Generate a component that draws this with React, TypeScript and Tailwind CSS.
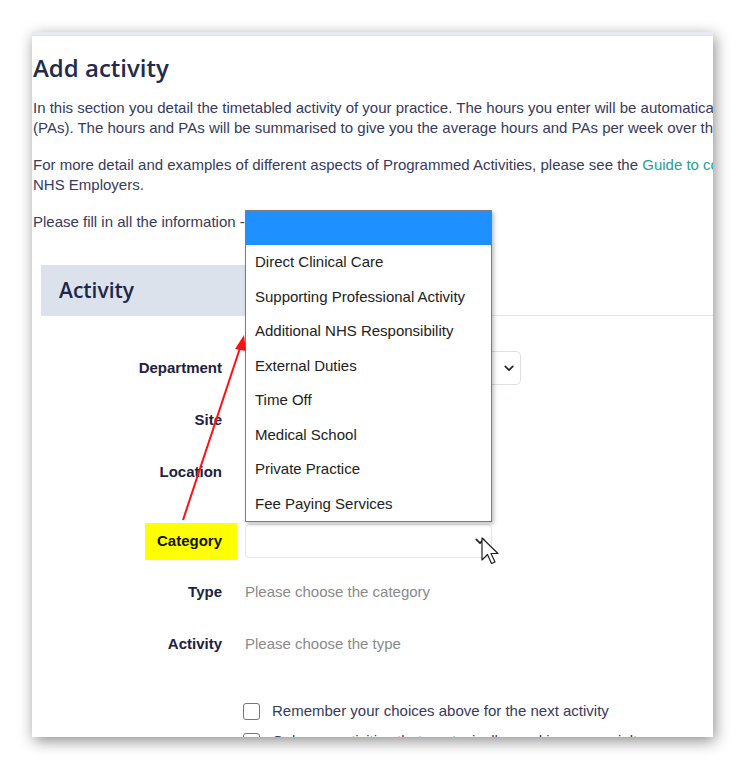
import React from 'react';

const categories = [
  'Direct Clinical Care',
  'Supporting Professional Activity',
  'Additional NHS Responsibility',
  'External Duties',
  'Time Off',
  'Medical School',
  'Private Practice',
  'Fee Paying Services',
];

const Chevron: React.FC<{ className?: string }> = ({ className }) => (
  <svg viewBox="0 0 12 8" className={className} fill="none">
    <path d="M1.5 1.5 L6 6 L10.5 1.5" stroke="#222" strokeWidth="2" strokeLinecap="round" strokeLinejoin="round" />
  </svg>
);

const FormRow: React.FC<{ label: React.ReactNode; className?: string; children?: React.ReactNode }> = ({
  label,
  className = '',
  children,
}) => (
  <div className={`flex items-center h-[34px] ${className}`}>
    <div className="w-[189px] flex justify-end text-[15px] font-bold text-[#1d2142]">{label}</div>
    <div className="ml-[23px] flex-1 flex items-center">{children}</div>
  </div>
);

const App: React.FC = () => {
  return (
    <div className="w-[745px] h-[769px] bg-white p-8 font-['Liberation_Sans',Arial,sans-serif]">
      <div className="relative w-[681px] h-[705px] overflow-hidden bg-white shadow-[2px_4px_14px_rgba(0,0,0,0.45)]">
        <div className="h-[4px] bg-[#e8ecf0] border-b border-[#dde2e7]" />

        <div className="pl-[1px] text-[15px] leading-[20px] text-[#363a5e] whitespace-nowrap">
          <h1 className="mt-[18px] mb-[16px] text-[24px] leading-[28px] font-semibold text-[#222a4e] font-['Open_Sans',sans-serif]">
            Add activity
          </h1>
          <p className="mb-[17px]">
            In this section you detail the timetabled activity of your practice. The hours you enter will be automatically converted into Programmed Activities
            <br />
            (PAs). The hours and PAs will be summarised to give you the average hours and PAs per week over the year.
          </p>
          <p className="mb-[17px]">
            For more detail and examples of different aspects of Programmed Activities, please see the{' '}
            <span className="text-[#2a9d90]">Guide to consultant job planning</span> produced by
            <br />
            NHS Employers.
          </p>
          <p>Please fill in all the information - all fields are mandatory.</p>

          <div className="ml-[8px] mt-[33px] border-b border-[#e1e5ea]">
            <div className="w-[400px] h-[50px] bg-[#dbe2eb] flex items-center pl-[18px]">
              <span className="text-[21px] font-semibold text-[#1f2749] font-['Open_Sans',sans-serif]">Activity</span>
            </div>
          </div>

          <div className="pt-[35px]">
            <FormRow label="Department">
              <div className="w-[276px] h-[34px] border border-[#dcdfe3] rounded-[5px] flex items-center justify-end pr-[6px]">
                <Chevron className="w-[10px] h-[7px]" />
              </div>
            </FormRow>
            <FormRow label="Site" className="mt-[18px]" />
            <FormRow label="Location" className="mt-[18px]" />
            <FormRow
              className="mt-[35px]"
              label={
                <span className="bg-[#ffff00] h-[37px] flex items-center pl-[12px] pr-[15px] -mr-[15px] text-[#111]">
                  Category
                </span>
              }
            >
              <div className="w-[247px] h-[34px] border border-[#e2e4e7] rounded-[4px] flex items-center justify-end pr-[6px]">
                <Chevron className="w-[10px] h-[7px]" />
              </div>
            </FormRow>
            <FormRow label="Type" className="mt-[17px]">
              <span className="text-[#8a8a8a] font-normal">Please choose the category</span>
            </FormRow>
            <FormRow label="Activity" className="mt-[18px]">
              <span className="text-[#8a8a8a] font-normal">Please choose the type</span>
            </FormRow>

            <div className="mt-[41px] ml-[210px] flex items-center h-[18px]">
              <span className="w-[17px] h-[17px] border-[1.5px] border-[#777] rounded-[3px] bg-white" />
              <span className="ml-[12px]">Remember your choices above for the next activity</span>
            </div>
            <div className="mt-[12px] ml-[210px] flex items-center h-[18px]">
              <span className="w-[17px] h-[17px] border-[1.5px] border-[#777] rounded-[3px] bg-white" />
              <span className="ml-[12px]">Only use activities that are typically used in my specialty</span>
            </div>
          </div>
        </div>

        {/* open category list */}
        <div className="absolute left-[213px] top-[178px] w-[247px] bg-white border border-[#7c7c7c] shadow-[2px_2px_4px_rgba(0,0,0,0.25)] text-[15px] text-[#222]">
          <div className="h-[34px] bg-[#1e90ff]" />
          {categories.map((c) => (
            <div key={c} className="h-[34.5px] flex items-center pl-[9px] whitespace-nowrap">
              {c}
            </div>
          ))}
        </div>

        {/* annotation arrow */}
        <svg className="absolute left-0 top-0 pointer-events-none" width="681" height="705">
          <line x1="151" y1="488" x2="208" y2="316" stroke="#ff1010" strokeWidth="2" />
          <polygon points="212,303 203,317 214,319" fill="#ff1010" />
        </svg>

        {/* mouse cursor */}
        <svg className="absolute left-[449px] top-[505px]" width="20" height="32" viewBox="0 0 20 32">
          <path
            d="M1 1 L1 23 L6.5 17.5 L10.5 26.5 L14 25 L10 16.5 L17 16.5 Z"
            fill="#fff"
            stroke="#222"
            strokeWidth="1.2"
            strokeLinejoin="round"
          />
        </svg>
      </div>
    </div>
  );
};

export default App;
